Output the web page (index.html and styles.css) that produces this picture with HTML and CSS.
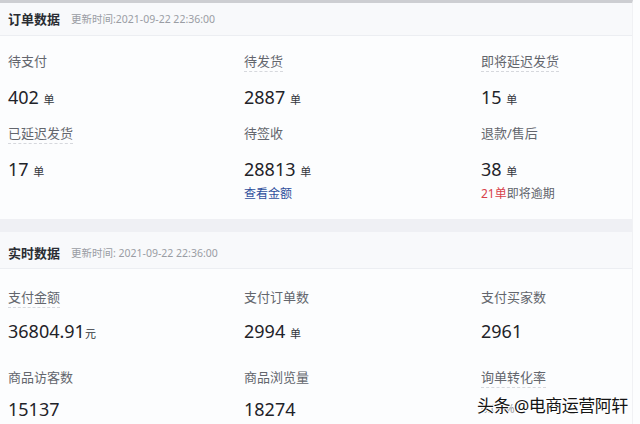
FILE: index.html
```html
<!DOCTYPE html>
<html lang="zh-CN">
<head>
  <meta charset="UTF-8">
  <meta name="viewport" content="width=device-width, initial-scale=1.0">
  <title>数据概览</title>
  <link rel="stylesheet" href="styles.css">
</head>
<body>
  <div class="page">
    <!-- 订单数据 -->
    <section class="card card-order">
      <div class="card-head">
        <span class="card-title">订单数据</span>
        <span class="card-time">更新时间:2021-09-22 22:36:00</span>
      </div>
      <div class="stats">
        <div class="stat">
          <div class="stat-label">待支付</div>
          <div class="stat-value">402 <span class="unit">单</span></div>
        </div>
        <div class="stat">
          <div class="stat-label dashed">待发货</div>
          <div class="stat-value">2887 <span class="unit">单</span></div>
        </div>
        <div class="stat">
          <div class="stat-label dashed">即将延迟发货</div>
          <div class="stat-value">15 <span class="unit">单</span></div>
        </div>
        <div class="stat">
          <div class="stat-label dashed">已延迟发货</div>
          <div class="stat-value">17 <span class="unit">单</span></div>
        </div>
        <div class="stat">
          <div class="stat-label">待签收</div>
          <div class="stat-value">28813 <span class="unit">单</span></div>
          <a class="stat-link" href="#">查看金额</a>
        </div>
        <div class="stat">
          <div class="stat-label">退款/售后</div>
          <div class="stat-value">38 <span class="unit">单</span></div>
          <div class="stat-note"><span class="warn">21单</span>即将逾期</div>
        </div>
      </div>
    </section>

    <!-- 实时数据 -->
    <section class="card card-live">
      <div class="card-head">
        <span class="card-title">实时数据</span>
        <span class="card-time">更新时间: 2021-09-22 22:36:00</span>
      </div>
      <div class="stats">
        <div class="stat">
          <div class="stat-label dashed">支付金额</div>
          <div class="stat-value">36804.91<span class="unit">元</span></div>
        </div>
        <div class="stat">
          <div class="stat-label">支付订单数</div>
          <div class="stat-value">2994 <span class="unit">单</span></div>
        </div>
        <div class="stat">
          <div class="stat-label">支付买家数</div>
          <div class="stat-value">2961</div>
        </div>
        <div class="stat">
          <div class="stat-label">商品访客数</div>
          <div class="stat-value">15137</div>
        </div>
        <div class="stat">
          <div class="stat-label">商品浏览量</div>
          <div class="stat-value">18274</div>
        </div>
        <div class="stat">
          <div class="stat-label dashed">询单转化率</div>
          <div class="stat-value faint">0.06%</div>
        </div>
      </div>
    </section>

    <div class="watermark">头条 @电商运营阿轩</div>
  </div>
</body>
</html>
```

FILE: styles.css
```css
body {
  margin: 0;
  padding: 0;
  background-color: #fcfdfe;
  font-family: "Noto Sans", "Noto Sans CJK SC", sans-serif;
  color: #1f2329;
}

.page {
  position: relative;
  width: 633px;
  height: 424px;
  overflow: hidden;
  border-top: 3px solid #cdced2;
  border-right: 1px solid #f0f1f4;
  box-sizing: border-box;
  background-color: #fcfdfe;
}

.card-head {
  display: flex;
  align-items: center;
  height: 32px;
  padding-left: 8px;
  background-color: #f8f9fb;
  border-bottom: 1px solid #eceef2;
  line-height: 16px;
}

.card-title {
  font-size: 13px;
  font-weight: 600;
  color: #2a2d33;
}

.card-time {
  margin-left: 11px;
  font-size: 10.5px;
  color: #9a9da4;
}

.stats {
  display: grid;
  grid-template-columns: 236px 237px 1fr;
  padding: 15px 0 15px 8px;
  row-gap: 14px;
}

.stat {
  font-size: 13px;
  line-height: 20px;
}

.stat-label {
  width: fit-content;
  height: 20px;
  font-size: 13px;
  line-height: 20px;
  color: #63666d;
  border-bottom: 1px solid transparent;
}

.stat-label.dashed {
  border-bottom: 1px dashed #d6d8dd;
}

.stat-value {
  height: 24px;
  margin-top: 13px;
  font-size: 18px;
  line-height: 24px;
  color: #1f2329;
}

.unit {
  font-size: 11px;
  line-height: 1;
  color: #33363c;
}

.stat-link {
  display: block;
  margin-top: 3px;
  font-size: 12px;
  line-height: 20px;
  color: #2f4f9c;
  text-decoration: none;
}

.stat-note {
  margin-top: 3px;
  font-size: 12px;
  line-height: 20px;
  color: #5f636b;
}

.warn {
  color: #d8414b;
}

/* 实时数据 */
.card-live {
  border-top: 13px solid #eff0f4;
}

.card-live .card-head {
  height: 31px;
  padding-top: 5px;
}

.card-live .stats {
  padding-top: 18px;
  row-gap: 24px;
}

.card-live .stat-value {
  margin-top: 11px;
}

.card-live .stat:nth-child(n+4) .stat-value {
  margin-top: 9px;
}

.faint {
  color: #9a9ca2;
  font-size: 12px;
}

.watermark {
  position: absolute;
  left: 477px;
  top: 391px;
  font-size: 17px;
  line-height: 24px;
  letter-spacing: -0.5px;
  color: #141414;
  text-shadow: 1px 0 #fff, -1px 0 #fff, 0 1px #fff, 0 -1px #fff, 1px 1px #fff, -1px -1px #fff;
}
```
